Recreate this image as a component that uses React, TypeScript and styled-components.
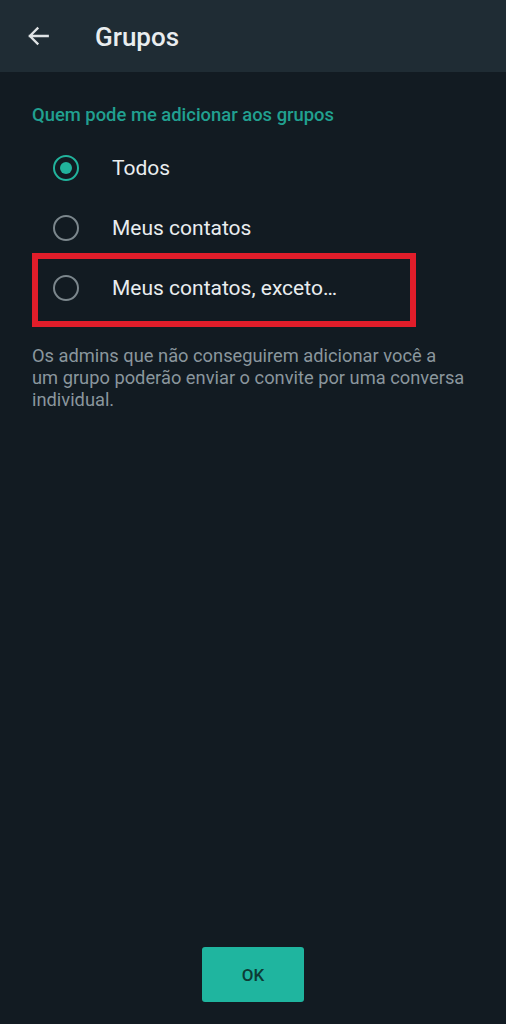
import React from "react";
import styled, { createGlobalStyle } from "styled-components";

const Global = createGlobalStyle`
  html, body { margin: 0; padding: 0; background: #121b22; }
  body { font-family: Roboto, "Noto Sans", Arial, sans-serif; -webkit-font-smoothing: antialiased; }
  * { box-sizing: border-box; }
`;

const Screen = styled.div`
  width: 506px;
  height: 1024px;
  background: #121b22;
  display: flex;
  flex-direction: column;
  overflow: hidden;
`;

const Header = styled.header`
  height: 72px;
  background: #1f2c34;
  display: flex;
  align-items: center;
  padding-left: 25px;
  flex-shrink: 0;
`;

const BackButton = styled.button`
  width: 26px;
  height: 26px;
  padding: 0;
  border: none;
  background: none;
  display: flex;
  align-items: center;
  justify-content: center;
  color: #dfe3e5;
`;

const Title = styled.h1`
  margin: 1px 0 0 44px;
  font-size: 26px;
  font-weight: 500;
  color: #e9edef;
`;

const Content = styled.main`
  padding: 0 32px;
  display: flex;
  flex-direction: column;
`;

const SectionLabel = styled.div`
  margin-top: 33px;
  height: 20px;
  line-height: 20px;
  font-size: 18.4px;
  color: #21a090;
  font-weight: 500;
`;

const OptionList = styled.div`
  margin-top: 13px;
  display: flex;
  flex-direction: column;
`;

const Option = styled.div`
  height: 60px;
  display: flex;
  align-items: center;
  position: relative;
`;

const Highlight = styled.div`
  position: absolute;
  left: 0;
  top: -5px;
  width: 384px;
  height: 74px;
  border: 6px solid #e11d2a;
  pointer-events: none;
`;

const Radio = styled.span<{ $checked?: boolean }>`
  width: 26px;
  height: 26px;
  margin-left: 21px;
  border-radius: 50%;
  border: 2.5px solid ${(p) => (p.$checked ? "#21b39c" : "#7b868c")};
  display: flex;
  align-items: center;
  justify-content: center;
  flex-shrink: 0;
  &::after {
    content: "";
    display: ${(p) => (p.$checked ? "block" : "none")};
    width: 12px;
    height: 12px;
    border-radius: 50%;
    background: #21b39c;
  }
`;

const OptionText = styled.span`
  margin-left: 33px;
  font-size: 21px;
  color: #e9edef;
`;

const Description = styled.p`
  margin: 27px 0 0;
  padding-right: 8px;
  font-size: 18.3px;
  line-height: 22px;
  color: #8a969d;
`;

const Footer = styled.div`
  margin-top: auto;
  display: flex;
  justify-content: center;
  padding-bottom: 22px;
`;

const OkButton = styled.button`
  width: 102px;
  height: 55px;
  border: none;
  border-radius: 3px;
  background: #1fb59f;
  color: #0d3b35;
  font-family: Roboto, Arial, sans-serif;
  font-size: 17px;
  font-weight: 500;
`;

const ArrowIcon = () => (
  <svg width="26" height="26" viewBox="0 0 24 24" fill="none">
    <path
      d="M21 12H4.5M11.5 5L4.5 12l7 7"
      stroke="currentColor"
      strokeWidth="2.1"
      strokeLinecap="square"
      strokeLinejoin="miter"
    />
  </svg>
);

const options = [
  { label: "Todos", checked: true },
  { label: "Meus contatos" },
  { label: "Meus contatos, exceto…", highlight: true },
];

export default function App() {
  return (
    <>
      <Global />
      <Screen>
        <Header>
          <BackButton aria-label="Voltar">
            <ArrowIcon />
          </BackButton>
          <Title>Grupos</Title>
        </Header>
        <Content>
          <SectionLabel>Quem pode me adicionar aos grupos</SectionLabel>
          <OptionList>
            {options.map((o) => (
              <Option key={o.label}>
                <Radio $checked={o.checked} />
                <OptionText>{o.label}</OptionText>
                {o.highlight && <Highlight />}
              </Option>
            ))}
          </OptionList>
          <Description>
            Os admins que não conseguirem adicionar você a um grupo poderão
            enviar o convite por uma conversa individual.
          </Description>
        </Content>
        <Footer>
          <OkButton>OK</OkButton>
        </Footer>
      </Screen>
    </>
  );
}
